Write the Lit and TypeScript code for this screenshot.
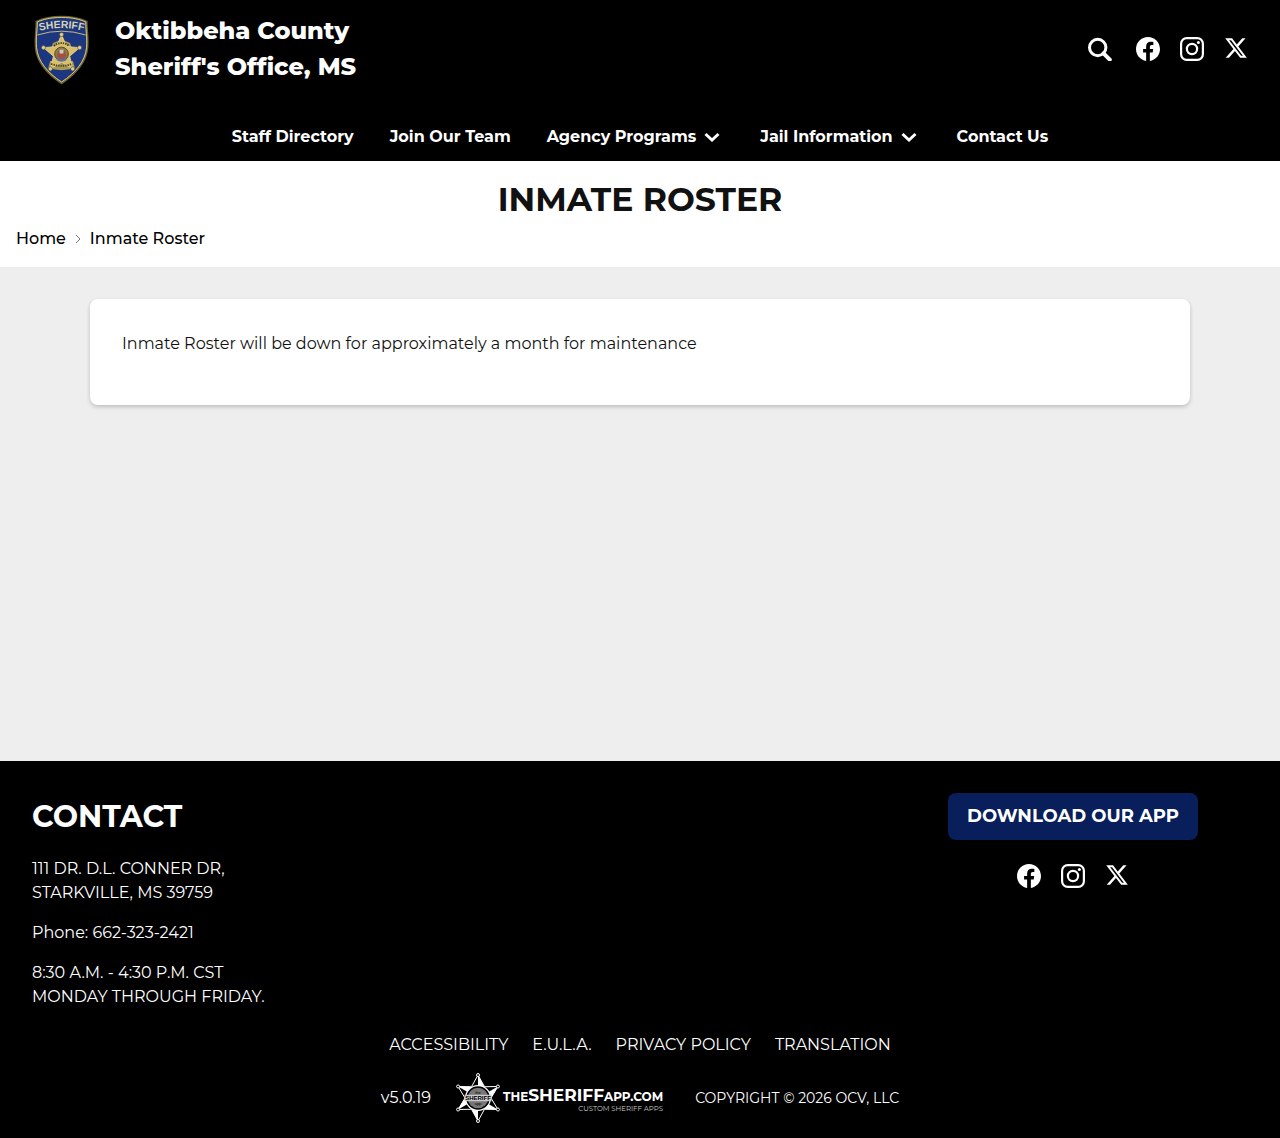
import { LitElement, html, svg, css } from "lit";
import { customElement } from "lit/decorators.js";

interface NavItem {
  label: string;
  menu?: boolean;
}

const NAV: NavItem[] = [
  { label: "Staff Directory" },
  { label: "Join Our Team" },
  { label: "Agency Programs", menu: true },
  { label: "Jail Information", menu: true },
  { label: "Contact Us" },
];

const LEGAL = ["ACCESSIBILITY", "E.U.L.A.", "PRIVACY POLICY", "TRANSLATION"];

const SOCIAL = [
  {
    name: "Facebook",
    shape: svg`<path fill="currentColor" d="M24 12.07C24 5.4 18.63 0 12 0S0 5.4 0 12.07C0 18.1 4.39 23.1 10.13 24v-8.44H7.08v-3.49h3.05V9.41c0-3.02 1.79-4.69 4.53-4.69 1.31 0 2.68.24 2.68.24v2.97h-1.51c-1.49 0-1.96.93-1.96 1.89v2.25h3.33l-.53 3.49h-2.8V24C19.61 23.1 24 18.1 24 12.07z"/>`,
  },
  {
    name: "Instagram",
    shape: svg`<rect x="1.1" y="1.1" width="21.8" height="21.8" rx="5.6" fill="none" stroke="currentColor" stroke-width="2.2"/><circle cx="12" cy="12" r="5.1" fill="none" stroke="currentColor" stroke-width="2.2"/><circle cx="18.4" cy="5.6" r="1.5" fill="currentColor"/>`,
  },
  {
    name: "X",
    shape: svg`<path fill="currentColor" fill-rule="evenodd" d="M18.24 1.25h3.31l-7.23 8.26L22.83 20.75h-6.66l-5.22-6.82-5.97 6.82H1.68l7.73-8.83L1.25 1.25h6.83l4.71 6.23zM17.08 18.77h1.84L7.08 3.13H5.11z"/>`,
  },
];

const socialLinks = () => html`
  <div class="social">
    ${SOCIAL.map(
      (s) => html`<a href="#" aria-label=${s.name}><svg viewBox="0 0 24 24" width="24" height="24" aria-hidden="true">${s.shape}</svg></a>`,
    )}
  </div>
`;

const base = css`
  * {
    box-sizing: border-box;
  }
  a {
    color: inherit;
    text-decoration: none;
  }
  svg {
    display: block;
  }
  .social {
    display: flex;
    gap: 20px;
  }
  .social a {
    display: block;
  }
`;

/** Points of a star with the given number of tips, first tip straight up. */
const star = (cx: number, cy: number, outer: number, inner: number, tips: number) =>
  Array.from({ length: tips * 2 }, (_, i) => {
    const r = i % 2 ? inner : outer;
    const a = (Math.PI * i) / tips - Math.PI / 2;
    return `${(cx + r * Math.cos(a)).toFixed(2)},${(cy + r * Math.sin(a)).toFixed(2)}`;
  });

@customElement("county-badge")
export class CountyBadge extends LitElement {
  static styles = css`
    :host {
      display: block;
    }
    svg {
      display: block;
    }
    .arc {
      font: 700 11px "Liberation Sans", Arial, sans-serif;
    }
  `;

  render() {
    const tips = star(29, 40, 20, 9, 5);
    return html`
      <svg viewBox="0 0 58 72" width="58" height="72" role="img" aria-label="Sheriff badge">
        <g transform="translate(2 2.500) scale(.95)">
          <path d="M29 1.5C40 1.5 49 3.6 55.2 6.5C55 15 57 22 56 34C54.5 49 44 61 29 71C14 61 3.500 49 2 34C1 22 3 15 2.800 6.500C9 3.600 18 1.500 29 1.500Z" fill="#1d3680" stroke="#6e632f" stroke-width="2.400"/>
          <path d="M29 2C40 2 48.500 4 54.500 6.800C54.300 15 56.200 22 55.300 34C53.800 48.500 43.500 60.500 29 70C14.500 60.500 4.200 48.500 2.700 34C1.800 22 3.700 15 3.500 6.800C9.500 4 18 2 29 2Z" fill="none" stroke="#d8c887" stroke-width="1"/>
          <path d="M3.500 20.500Q29 12.500 54.500 20.500" fill="none" stroke="#cdbf7c" stroke-width="1"/>
          <path id="arc" d="M2 17Q29 9.500 56 17" fill="none"/>
          <text class="arc" fill="#d8d2b0" text-anchor="middle"><textPath href="#arc" startOffset="50%">SHERIFF</textPath></text>
          <path d="M20 29Q29 24 38 29L40 35H18ZM17 48H41L43 55Q29 60 15 55Z" fill="#a89a55"/>
          <polygon points=${tips.join(" ")} fill="#d9bf68" stroke="#f0dd9a" stroke-width=".8"/>
          ${tips
            .filter((_, i) => i % 2 === 0)
            .map((p) => {
              const [x, y] = p.split(",");
              return svg`<circle cx=${x} cy=${y} r="2.200" fill="#e7cd79" stroke="#3b3d5c" stroke-width=".6"/>`;
            })}
          <path d="M21 32Q29 26 37 32M18 51Q29 55 40 51" fill="none" stroke="#4a4530" stroke-width="2" stroke-dasharray="1.500 1"/>
          <circle cx="29" cy="40.500" r="7.200" fill="#8d7a4a" stroke="#54482c" stroke-width="1"/>
          <path d="M24 42l2-5 3 3 3-3 2 5-2 4h-6z" fill="#a3503f"/>
          <path d="M27 36h4v4h-4z" fill="#c9c9c2"/>
          <path d="M24 44q5 4 10 0v3q-5 3-10 0z" fill="#5870a8"/>
        </g>
      </svg>
    `;
  }
}

@customElement("app-badge")
export class AppBadge extends LitElement {
  static styles = css`
    :host {
      display: block;
    }
    svg {
      display: block;
    }
    .word {
      font: 700 6px "Liberation Sans", Arial, sans-serif;
    }
    .small {
      font: 400 4px "Liberation Sans", Arial, sans-serif;
    }
  `;

  render() {
    const pts = star(23, 25, 23, 13, 6).map((p) => p.split(","));
    return html`
      <svg viewBox="0 0 46 50" width="46" height="50" role="img" aria-label="The Sheriff App star">
        <polygon points=${pts.map((p) => p.join(",")).join(" ")} fill="#000" stroke="#fff" stroke-width="1"/>
        ${pts.map((p, i) => {
          if (i % 2) return null;
          const n = pts[i + 1];
          return svg`<polygon points=${`${p} ${n} 23,25`} fill="#fff"/>`;
        })}
        ${pts.map((p, i) => (i % 2 ? null : svg`<circle cx=${p[0]} cy=${p[1]} r="1.500" fill="#000" stroke="#fff" stroke-width="1"/>`))}
        <circle cx="23" cy="25" r="13" fill="#fff"/>
        <circle cx="23" cy="25" r="11.800" fill="#000"/>
        <circle cx="23" cy="25" r="10.300" fill="#777"/>
        <rect x="9.500" y="21.800" width="27" height="6.400" fill="#ccc"/>
        <text class="small" x="23" y="20.500" text-anchor="middle">the</text>
        <text class="word" x="23" y="27.200" text-anchor="middle">SHERIFF</text>
        <text class="small" x="23" y="31.800" text-anchor="middle">app</text>
      </svg>
    `;
  }
}

@customElement("site-header")
export class SiteHeader extends LitElement {
  static styles = [
    base,
    css`
      :host {
        display: block;
        background: #000;
        color: #fff;
      }
      .top {
        display: flex;
        justify-content: space-between;
        align-items: flex-start;
        padding: 13px 32px 0;
      }
      .brand {
        display: flex;
        gap: 25px;
        font-size: 24px;
        font-weight: 800;
        line-height: 36px;
      }
      .tools {
        display: flex;
        gap: 24px;
        padding-top: 24px;
      }
      .search {
        display: block;
        padding: 0;
        border: 0;
        background: none;
        color: inherit;
        cursor: pointer;
      }
      nav {
        display: flex;
        flex-wrap: wrap;
        justify-content: center;
        gap: 0 36px;
        padding: 40px 32px 12px;
      }
      nav a {
        display: flex;
        align-items: center;
        gap: 4px;
        font-size: 16px;
        font-weight: 700;
        line-height: 24px;
      }
    `,
  ];

  render() {
    return html`
      <div class="top">
        <a class="brand" href="#">
          <county-badge></county-badge>
          <span>Oktibbeha County<br />Sheriff's Office, MS</span>
        </a>
        <div class="tools">
          <button class="search" type="button" aria-label="Search">
            <svg viewBox="0 0 24 24" width="24" height="24" fill="none" stroke="currentColor" aria-hidden="true">
              <circle cx="9.700" cy="10.500" r="8.200" stroke-width="3" />
              <path d="M15.500 16.300L21.800 22.600" stroke-width="4" stroke-linecap="round" />
            </svg>
          </button>
          ${socialLinks()}
        </div>
      </div>
      <nav aria-label="Main">
        ${NAV.map(
          (item) => html`<a href="#"
            >${item.label}${item.menu
              ? html`<svg viewBox="0 0 24 24" width="24" height="24" fill="none" stroke="currentColor" stroke-width="3" aria-hidden="true">
                  <path d="M5.500 9L12 15L18.500 9" />
                </svg>`
              : null}</a
          >`,
        )}
      </nav>
    `;
  }
}

@customElement("site-footer")
export class SiteFooter extends LitElement {
  static styles = [
    base,
    css`
      :host {
        display: block;
        padding: 32px 32px 15px;
        background: #000;
        color: #fff;
        font-size: 16px;
        line-height: 24px;
      }
      .columns {
        display: flex;
        flex-wrap: wrap;
        justify-content: space-between;
      }
      address {
        font-style: normal;
      }
      h2 {
        margin: 0 0 16px;
        font-size: 30px;
        font-weight: 700;
        line-height: 48px;
      }
      p {
        margin: 0 0 16px;
      }
      .side {
        display: flex;
        flex: 0 1 350px;
        flex-direction: column;
        align-items: center;
        gap: 24px;
      }
      .download {
        padding: 12px 19px;
        border-radius: 8px;
        background: #081f5c;
        font-size: 18px;
        font-weight: 700;
        line-height: 23px;
      }
      .legal {
        display: flex;
        flex-wrap: wrap;
        justify-content: center;
        gap: 0 24px;
        margin-top: 8px;
      }
      .credits {
        display: flex;
        flex-wrap: wrap;
        align-items: center;
        justify-content: center;
        gap: 24px;
        margin-top: 16px;
      }
      .vendor {
        display: flex;
        align-items: center;
        gap: 2px;
        margin-right: 8px;
      }
      .wordmark {
        display: flex;
        flex-direction: column;
        align-items: flex-end;
        padding-top: 4px;
        font-size: 12px;
        font-weight: 700;
        line-height: 16px;
      }
      .big {
        font-size: 17px;
      }
      .tag {
        font-size: 7px;
        font-weight: 400;
        line-height: 8px;
        color: #ccc;
      }
      .copy {
        font-size: 14px;
      }
    `,
  ];

  render() {
    return html`
      <div class="columns">
        <address>
          <h2>CONTACT</h2>
          <p>111 DR. D.L. CONNER DR,<br />STARKVILLE, MS 39759</p>
          <p>Phone: <a href="tel:6623232421">662-323-2421</a></p>
          <p>8:30 A.M. - 4:30 P.M. CST<br />MONDAY THROUGH FRIDAY.</p>
        </address>
        <div class="side">
          <a class="download" href="#">DOWNLOAD OUR APP</a>
          ${socialLinks()}
        </div>
      </div>
      <div class="legal">${LEGAL.map((label) => html`<a href="#">${label}</a>`)}</div>
      <div class="credits">
        <span>v5.0.19</span>
        <a class="vendor" href="#">
          <app-badge></app-badge>
          <span class="wordmark">
            <span>THE<span class="big">SHERIFF</span>APP.COM</span>
            <span class="tag">CUSTOM SHERIFF APPS</span>
          </span>
        </a>
        <span class="copy">COPYRIGHT © 2026 OCV, LLC</span>
      </div>
    `;
  }
}

@customElement("app-root")
export class AppRoot extends LitElement {
  static styles = [
    base,
    css`
      :host {
        display: flex;
        flex-direction: column;
        min-height: 100vh;
        background: #eee;
        color: #111;
        font-family: Montserrat, Inter, "Open Sans", sans-serif;
        font-size: 16px;
        line-height: 24px;
      }
      .heading {
        padding: 14px 16px 16px;
        background: #fff;
      }
      h1 {
        margin: 0;
        font-size: 33px;
        font-weight: 700;
        line-height: 48px;
        text-align: center;
      }
      .crumbs {
        display: flex;
        align-items: center;
        gap: 8px;
        padding-top: 4px;
        color: #000;
        font-weight: 500;
      }
      main {
        flex: 1;
        padding: 32px;
      }
      .card {
        max-width: 1100px;
        margin: 0 auto;
        padding: 32px;
        border-radius: 8px;
        background: #fff;
        box-shadow: 0 2px 4px rgba(0, 0, 0, 0.2);
      }
      .card p {
        margin: 0 0 16px;
        line-height: 26px;
      }
    `,
  ];

  render() {
    return html`
      <site-header></site-header>
      <div class="heading">
        <h1>INMATE ROSTER</h1>
        <nav class="crumbs" aria-label="Breadcrumb">
          <a href="#">Home</a>
          <svg viewBox="0 0 8 12" width="8" height="12" fill="none" stroke="#777" aria-hidden="true"><path d="M2 2L6 6L2 10" /></svg>
          <a href="#">Inmate Roster</a>
        </nav>
      </div>
      <main>
        <section class="card">
          <p>Inmate Roster will be down for approximately a month for maintenance</p>
        </section>
      </main>
      <site-footer></site-footer>
    `;
  }
}
